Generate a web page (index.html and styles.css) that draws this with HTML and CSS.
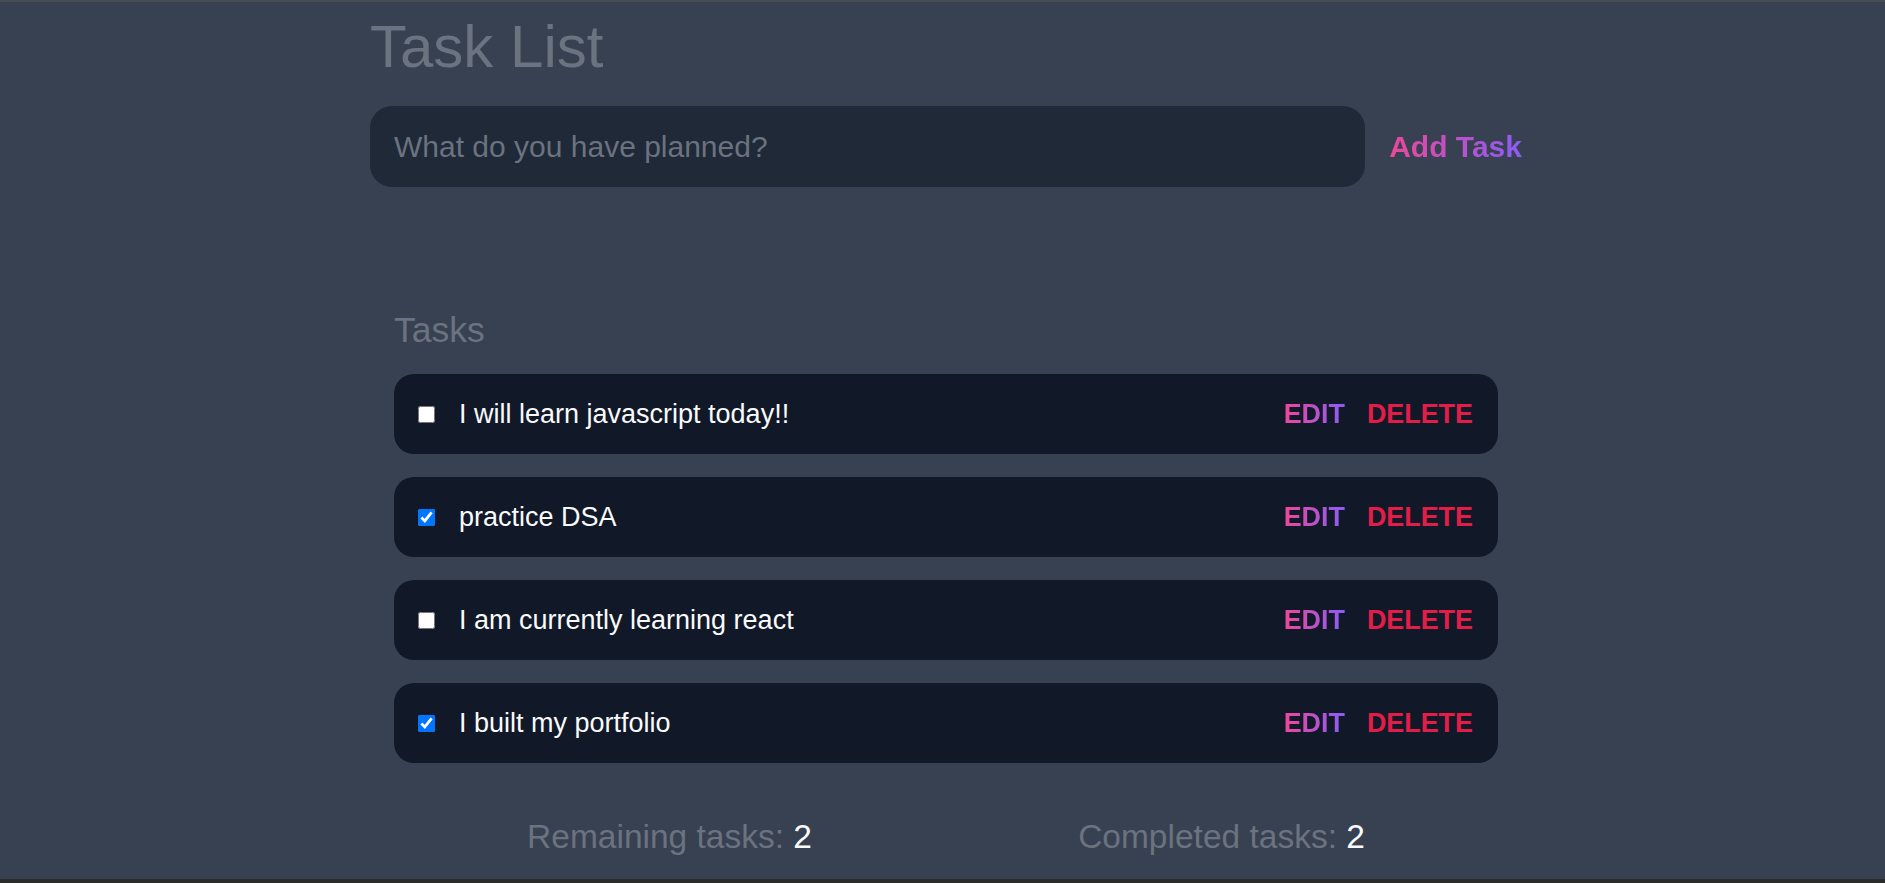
FILE: index.html
```html
<!DOCTYPE html>
<html lang="en">
<head>
<meta charset="utf-8">
<title>Task List</title>
<link rel="stylesheet" href="styles.css">
</head>
<body>
<div class="page">
  <main class="container">
    <h1 class="title">Task List</h1>
    <form class="add-form">
      <input class="add-input" type="text" placeholder="What do you have planned?">
      <button class="add-btn gradient-text" type="button">Add Task</button>
    </form>
    <section class="tasks">
      <h2 class="tasks-heading">Tasks</h2>
      <ul class="task-list">
        <li class="task">
          <input class="task-check" type="checkbox">
          <span class="task-text">I will learn javascript today!!</span>
          <div class="task-actions">
            <button class="edit-btn gradient-text" type="button">EDIT</button>
            <button class="delete-btn" type="button">DELETE</button>
          </div>
        </li>
        <li class="task">
          <input class="task-check" type="checkbox" checked>
          <span class="task-text">practice DSA</span>
          <div class="task-actions">
            <button class="edit-btn gradient-text" type="button">EDIT</button>
            <button class="delete-btn" type="button">DELETE</button>
          </div>
        </li>
        <li class="task">
          <input class="task-check" type="checkbox">
          <span class="task-text">I am currently learning react</span>
          <div class="task-actions">
            <button class="edit-btn gradient-text" type="button">EDIT</button>
            <button class="delete-btn" type="button">DELETE</button>
          </div>
        </li>
        <li class="task">
          <input class="task-check" type="checkbox" checked>
          <span class="task-text">I built my portfolio</span>
          <div class="task-actions">
            <button class="edit-btn gradient-text" type="button">EDIT</button>
            <button class="delete-btn" type="button">DELETE</button>
          </div>
        </li>
      </ul>
      <div class="stats">
        <p class="stat">Remaining tasks: <span class="stat-num">2</span></p>
        <p class="stat">Completed tasks: <span class="stat-num">2</span></p>
      </div>
    </section>
  </main>
</div>
</body>
</html>
```
FILE: styles.css
```css
* {
  box-sizing: border-box;
}

html, body {
  margin: 0;
  padding: 0;
}

body {
  background: #374151;
  font-family: "Liberation Sans", Arial, sans-serif;
}

.page {
  min-height: 100vh;
  border-top: 2px solid #474c55;
  border-bottom: 4px solid #2a2c2b;
  overflow: hidden;
}

.container {
  width: 1152px;
  margin: 0 0 0 370px;
}

.title {
  margin: 15px 0 0 0;
  font-size: 60px;
  line-height: 60px;
  font-weight: 400;
  color: #6b7280;
}

.add-form {
  display: flex;
  align-items: center;
  gap: 24px;
  margin-top: 29px;
}

.add-input {
  flex: 1;
  height: 81px;
  border: none;
  outline: none;
  border-radius: 22px;
  background: #1f2937;
  padding: 0 24px;
  font-family: "Liberation Sans", Arial, sans-serif;
  font-size: 30px;
  color: #f9fafb;
}

.add-input::placeholder {
  color: #6b7280;
}

.gradient-text {
  background: linear-gradient(to right, #ec4899, #8b5cf6);
  -webkit-background-clip: text;
  background-clip: text;
  color: transparent;
}

.add-btn {
  border: none;
  padding: 0;
  font-family: "Liberation Sans", Arial, sans-serif;
  font-size: 30px;
  font-weight: 700;
  cursor: pointer;
}

.tasks {
  padding: 0 24px;
}

.tasks-heading {
  margin: 123px 0 0 0;
  font-size: 35.5px;
  line-height: 40px;
  font-weight: 400;
  color: #6b7280;
}

.task-list {
  list-style: none;
  margin: 24px 0 0 0;
  padding: 0;
  display: flex;
  flex-direction: column;
  gap: 23px;
}

.task {
  display: flex;
  align-items: center;
  height: 80px;
  padding: 0 25px 0 24px;
  border-radius: 20px;
  background: #111827;
}

.task-check {
  width: 17px;
  height: 17px;
  margin: 0 24px 0 0;
  flex: none;
}

.task-text {
  flex: 1;
  font-size: 27px;
  color: #f9fafb;
}

.task-actions {
  display: flex;
  gap: 22px;
}

.edit-btn,
.delete-btn {
  border: none;
  padding: 0;
  font-family: "Liberation Sans", Arial, sans-serif;
  font-size: 26.9px;
  font-weight: 700;
  cursor: pointer;
}

.delete-btn {
  background: none;
  color: #e11d48;
}

.stats {
  display: flex;
  justify-content: space-around;
  margin-top: 54px;
}

.stat {
  margin: 0;
  font-size: 33.5px;
  line-height: 40px;
  color: #6b7280;
}

.stat-num {
  color: #f9fafb;
}
```
